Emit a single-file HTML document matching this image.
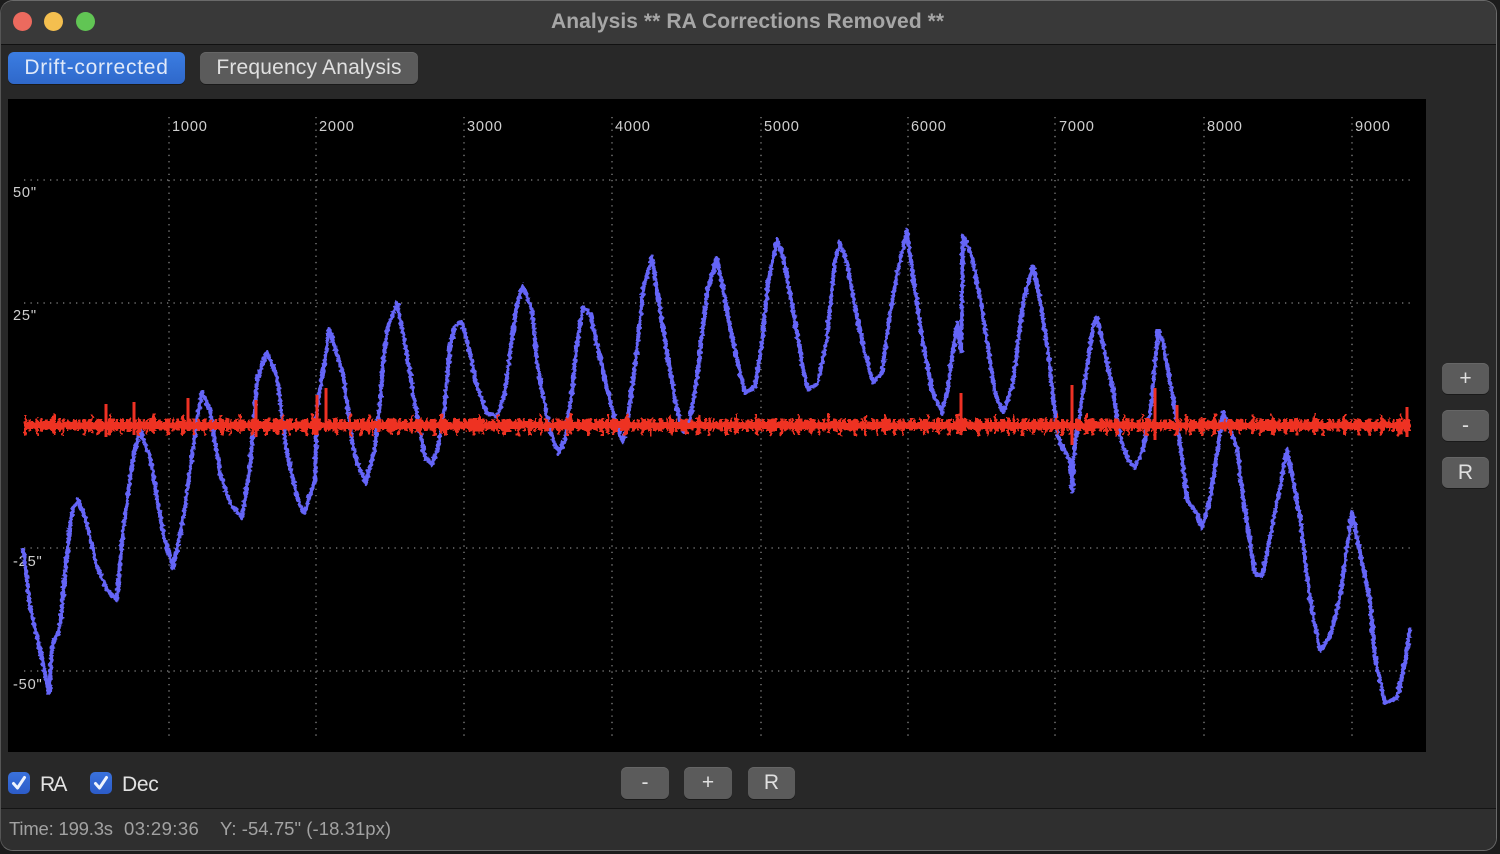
<!DOCTYPE html>
<html>
<head>
<meta charset="utf-8">
<title>Analysis ** RA Corrections Removed **</title>
<style>
html,body{margin:0;padding:0;width:1500px;height:854px;overflow:hidden;background:#1c1c1c;font-family:"Liberation Sans",sans-serif}
.win{position:absolute;left:0;top:0;width:1495px;height:849px;background:#282828;border:1px solid #6a6a6a;border-left-color:#555;border-radius:13px;overflow:hidden}
.abs{position:absolute;white-space:nowrap}
.tb{position:absolute;left:0;top:0;right:0;height:43px;background:#393939;border-bottom:1px solid #111}
.sb{position:absolute;left:0;right:0;top:807px;bottom:0;background:#2f2f2f;border-top:1px solid #141414}
.dot{position:absolute;top:11px;width:19px;height:19px;border-radius:50%}
.btn{position:absolute;background:#5b5b5b;border-radius:6px;color:#e0e0e0;text-align:center;box-shadow:0 1px 0 #1a1a1a,inset 0 1px 0 #666;font-size:21px;line-height:32px}
.cb{position:absolute;top:771px;width:22px;height:22px;border-radius:5px;background:linear-gradient(#3a72dc,#2c5cc8)}
svg{position:absolute}
</style>
</head>
<body>
<div class="win">
  <div class="tb"></div>
  <div class="dot" style="left:12px;background:#ec6a5e"></div>
  <div class="dot" style="left:43px;background:#f4bf4f"></div>
  <div class="dot" style="left:75px;background:#61c554"></div>
  <div class="abs" style="left:550px;top:9px;font-size:21px;font-weight:bold;color:#a6a6a6;line-height:24px;letter-spacing:.08px">Analysis ** RA Corrections Removed **</div>

  <div class="btn" style="left:7px;top:51px;width:177px;height:32px;background:linear-gradient(#3b7de2,#2f68ca);color:#e0e9f9;box-shadow:0 1px 0 #1a1a1a;letter-spacing:.75px">Drift-corrected</div>
  <div class="btn" style="left:199px;top:51px;width:218px;height:32px;letter-spacing:.18px">Frequency Analysis</div>

  <div class="btn" style="left:1441px;top:362px;width:47px;height:31px">+</div>
  <div class="btn" style="left:1441px;top:409px;width:47px;height:31px">-</div>
  <div class="btn" style="left:1441px;top:456px;width:47px;height:31px">R</div>

  <div class="btn" style="left:620px;top:766px;width:48px;height:32px">-</div>
  <div class="btn" style="left:683px;top:766px;width:48px;height:32px">+</div>
  <div class="btn" style="left:747px;top:766px;width:47px;height:32px">R</div>

  <div class="cb" style="left:7px"><svg width="22" height="22" style="left:0;top:0"><path d="M5.5 11.5 L9.5 16 L16.5 5.5" fill="none" stroke="#eef3fd" stroke-width="3" stroke-linecap="round" stroke-linejoin="round"/></svg></div>
  <div class="abs" style="left:39px;top:771px;font-size:21px;line-height:26px;color:#e2e2e2;letter-spacing:-1.8px">RA</div>
  <div class="cb" style="left:89px"><svg width="22" height="22" style="left:0;top:0"><path d="M5.5 11.5 L9.5 16 L16.5 5.5" fill="none" stroke="#eef3fd" stroke-width="3" stroke-linecap="round" stroke-linejoin="round"/></svg></div>
  <div class="abs" style="left:121px;top:771px;font-size:21px;line-height:26px;color:#e2e2e2;letter-spacing:-.3px">Dec</div>

  <div class="sb"></div>
  <div class="abs" style="left:8px;top:817px;font-size:18.5px;line-height:22px;color:#a2a2a2;letter-spacing:-.2px">Time: 199.3s</div>
  <div class="abs" style="left:123px;top:817px;font-size:18.5px;line-height:22px;color:#a2a2a2;letter-spacing:.4px">03:29:36</div>
  <div class="abs" style="left:219px;top:817px;font-size:18.5px;line-height:22px;color:#a2a2a2;letter-spacing:.05px">Y: -54.75" (-18.31px)</div>
</div>

<svg width="1418" height="653" viewBox="8 99 1418 653" style="left:8px;top:99px;background:#000">
  <defs>
    <filter id="jit" filterUnits="userSpaceOnUse" x="0" y="90" width="1430" height="670">
      <feTurbulence type="fractalNoise" baseFrequency="0.22 0.3" numOctaves="2" seed="4" result="n"/>
      <feDisplacementMap in="SourceGraphic" in2="n" scale="5" xChannelSelector="R" yChannelSelector="G"/>
    </filter>
  </defs>
  <g stroke="#858585" stroke-width="1.3">
    <path d="M169 117V736M316 117V736M464 117V736M612 117V736M761 117V736M908 117V736M1055 117V736M1204 117V736M1352 117V736" stroke-dasharray="1.3 5"/>
    <path d="M24 180H1412M24 303H1412M24 548H1412M24 671H1412" stroke-dasharray="1.3 5.2"/>
  </g>
  <g font-family="'Liberation Sans',sans-serif" font-size="14.6" fill="#cfcfcf" letter-spacing=".8">
    <text x="172" y="131">1000</text><text x="319" y="131">2000</text><text x="467" y="131">3000</text>
    <text x="615" y="131">4000</text><text x="764" y="131">5000</text><text x="911" y="131">6000</text>
    <text x="1059" y="131">7000</text><text x="1207" y="131">8000</text><text x="1355" y="131">9000</text>
    <text x="13" y="197">50"</text><text x="13" y="320">25"</text><text x="13" y="566">-25"</text><text x="13" y="689">-50"</text>
  </g>
  <polyline filter="url(#jit)" fill="none" stroke="#6565f7" stroke-width="4" stroke-linejoin="round" points="23,548 30,607 38,640 45,673 49,693 52,647 60,627 67,553 72,510 78,500 85,517 97,567 107,590 117,600 122,540 132,463 140,430 150,457 163,533 173,568 183,520 190,470 197,420 202,392 210,410 220,473 230,503 242,518 250,467 257,380 267,352 277,377 287,453 297,497 304,513 315,480 317,407 325,360 329,328 335,348 343,373 348,410 353,447 358,465 366,483 375,447 380,403 383,363 388,327 397,303 403,333 410,373 417,417 425,457 432,465 438,447 445,403 450,347 455,325 462,322 470,353 477,387 487,413 497,417 505,393 510,353 517,303 523,285 532,310 537,363 545,407 553,440 559,453 565,440 572,390 577,343 583,307 590,313 600,357 608,393 615,420 623,443 628,417 637,350 643,290 652,257 658,297 667,353 677,410 684,432 690,420 697,377 703,327 708,287 713,272 716,258 722,283 730,327 737,360 745,393 755,387 762,343 768,283 777,240 783,257 793,310 802,363 808,390 818,383 827,337 835,260 840,242 847,263 857,317 865,353 873,383 882,373 890,313 898,270 907,230 913,277 923,343 932,390 942,413 948,387 957,323 961,352 963,235 973,260 982,310 990,360 995,393 1003,413 1013,383 1023,303 1033,265 1040,300 1048,353 1058,437 1060,443 1070,460 1072,492 1075,443 1083,393 1093,327 1097,317 1105,353 1113,390 1120,437 1128,460 1135,468 1143,450 1152,400 1158,330 1163,343 1172,393 1180,443 1187,500 1197,513 1202,528 1210,500 1217,453 1223,413 1237,447 1243,497 1250,543 1255,573 1262,577 1270,537 1280,487 1287,450 1293,480 1300,517 1307,577 1312,610 1320,650 1330,637 1340,597 1352,512 1362,563 1370,600 1375,657 1385,703 1397,698 1405,663 1410,627"/>
  <g fill="none" stroke="#ee3124">
    <g filter="url(#jit)">
      <path d="M24 425.5H1410" stroke-width="7"/>
      <path d="M24 425H1410" stroke-width="12" stroke-dasharray="3 2 2 4 4 1 2 3 3 2 5 3 2 2"/>
      <path d="M24 427H1410" stroke-width="17" stroke-dasharray="3 9 2 15 3 6 2 19 3 11 3 8"/>
      <path d="M24 424H1410" stroke-width="20" stroke-dasharray="2 27 3 35 2 17 2 41"/>
    </g>
    <path d="M106 437V404M134 435V402M188 430V398M256 437V400M317 435V395M326 430V388M961 435V393M1072 445V385M1155 440V388M1177 435V405M1407 437V407" stroke-width="3"/>
  </g>
</svg>
</body>
</html>
